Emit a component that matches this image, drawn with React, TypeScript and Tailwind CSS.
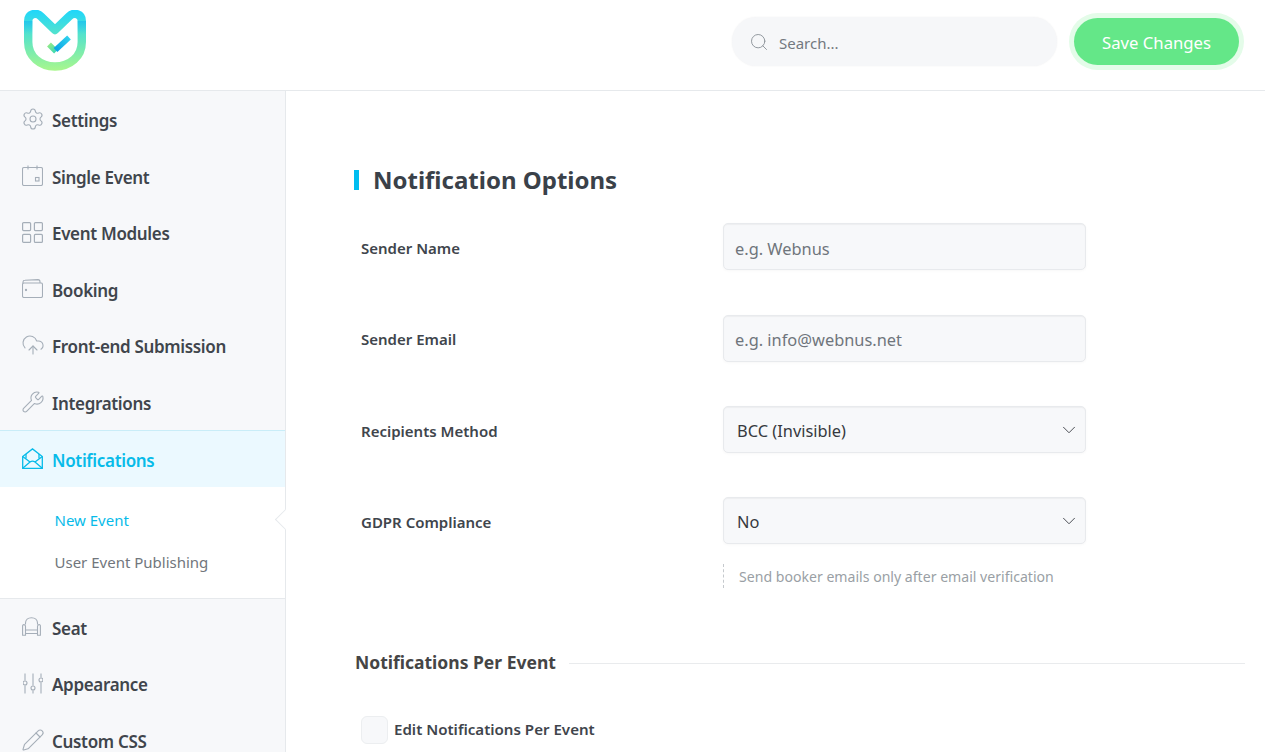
import { Settings, CloudUpload, Wrench, Pencil, Search, ChevronDown } from "lucide-react";

const C = "shrink-0 text-[#a5aeb8]";

function Cal() {
  return (
    <svg width="21" height="21" viewBox="0 0 21 21" fill="none" stroke="currentColor" strokeWidth="1.1" className={C}>
      <rect x="0.5" y="2.5" width="20" height="18" rx="1.5" />
      <path d="M6 0.5V4.5M15 0.5V4.5" />
      <rect x="13.5" y="12.5" width="3.5" height="3.5" />
    </svg>
  );
}
function Grid() {
  return (
    <svg width="21" height="21" viewBox="0 0 21 21" fill="none" stroke="currentColor" strokeWidth="1.2" className={C}>
      <rect x="0.6" y="0.6" width="8" height="8" rx="1" />
      <rect x="12.4" y="0.6" width="8" height="8" rx="1" />
      <rect x="0.6" y="12.4" width="8" height="8" rx="1" />
      <rect x="12.4" y="12.4" width="8" height="8" rx="1" />
    </svg>
  );
}
function Wallet() {
  return (
    <svg width="21" height="19" viewBox="0 0 21 19" fill="none" stroke="currentColor" strokeWidth="1.1" className={C}>
      <rect x="0.5" y="4" width="20" height="14.5" rx="1.5" />
      <path d="M1 4.5V3C1 2 2 1.2 3 1.2L16 0.6C17.2 0.6 18 1.5 18 2.8V4" />
      <circle cx="4" cy="11" r="0.6" fill="currentColor" />
    </svg>
  );
}
function Envelope() {
  return (
    <svg width="21" height="21" viewBox="0 0 21 21" fill="none" stroke="currentColor" strokeWidth="1.3" className="shrink-0 text-[#07bbe9]">
      <path d="M0.7 8.5L10.5 0.9L20.3 8.5V20.3H0.7Z" />
      <path d="M0.7 8.5L8 14M20.3 8.5L13 14M0.7 20.3L8 14C9.5 12.9 11.5 12.9 13 14L20.3 20.3" />
      <path d="M4 10.5V6M17 10.5V6" />
    </svg>
  );
}
function Seat() {
  return (
    <svg width="19" height="19" viewBox="0 0 19 19" fill="none" stroke="currentColor" strokeWidth="1.1" className={`${C} -ml-[2px]`}>
      <path d="M3.5 7.5V6C3.5 2.8 6 0.7 9.5 0.7S15.5 2.8 15.5 6V7.5" />
      <path d="M3.5 13V9.5C3.5 8.2 2.7 7.6 1.8 7.6C1 7.6 0.6 8.2 0.6 9V18.3H3.5V16.5H15.5V18.3H18.4V9C18.4 8.2 18 7.6 17.2 7.6C16.3 7.6 15.5 8.2 15.5 9.5V13Z" />
      <path d="M3.5 13V16.5M15.5 13V16.5" />
    </svg>
  );
}
function Sliders() {
  return (
    <svg width="20" height="21" viewBox="0 0 20 21" fill="none" stroke="currentColor" strokeWidth="1.1" className={C}>
      <path d="M2 0.5V7.5M2 12.5V20.5M10 0.5V12.5M10 17.5V20.5M18 0.5V4.5M18 9.5V20.5" />
      <circle cx="2" cy="10" r="2" />
      <circle cx="10" cy="15" r="2" />
      <circle cx="18" cy="7" r="2" />
    </svg>
  );
}

function Logo() {
  return (
    <svg width="62" height="61" viewBox="0 0 62 61" fill="none" className="ml-[24px] mt-[10px] shrink-0">
      <defs>
        <linearGradient id="lg" x1="0" y1="0" x2="0" y2="61" gradientUnits="userSpaceOnUse">
          <stop offset="0" stopColor="#1fd6fb" />
          <stop offset="0.45" stopColor="#5be4c6" />
          <stop offset="1" stopColor="#a9f78c" />
        </linearGradient>
        <linearGradient id="lb" x1="0" y1="6" x2="0" y2="24" gradientUnits="userSpaceOnUse">
          <stop offset="0" stopColor="#12b5ee" stopOpacity="0.75" />
          <stop offset="1" stopColor="#12b5ee" stopOpacity="0" />
        </linearGradient>
        <linearGradient id="lc" x1="31" y1="38" x2="46" y2="25" gradientUnits="userSpaceOnUse">
          <stop offset="0" stopColor="#0ba6e6" />
          <stop offset="1" stopColor="#35d7ee" />
        </linearGradient>
        <linearGradient id="ld" x1="23" y1="33" x2="31" y2="42" gradientUnits="userSpaceOnUse">
          <stop offset="0" stopColor="#a5ee7f" />
          <stop offset="1" stopColor="#3fd9b0" />
        </linearGradient>
      </defs>
      <path d="M4.2 32V11C4.2 4 12 1.6 17 6.5L31 20L45 6.5C50 1.6 57.8 4 57.8 11V32C57.8 46.5 46 56.5 31 56.5C16 56.5 4.2 46.5 4.2 32Z" stroke="url(#lg)" strokeWidth="8.4" strokeLinejoin="round" />
      <path d="M4.2 24V11M57.8 24V11" stroke="url(#lb)" strokeWidth="8.4" />
      <path d="M25 34.5L32 41.5" stroke="url(#ld)" strokeWidth="5.4" />
      <path d="M31.5 40L45 27.5" stroke="url(#lc)" strokeWidth="5.4" />
    </svg>
  );
}

function Item({ icon, label, active }: { icon: React.ReactNode; label: string; active?: boolean }) {
  return (
    <div className={active ? "flex h-[56.5px] items-center gap-[9px] border-t border-[#c9edf8] bg-[#ebf9ff] pl-[22px] text-[#07bbe9]" : "flex h-[56.5px] items-center gap-[9px] pl-[22px] text-[#40454c]"}>
      <span className="flex w-[21px] justify-center">{icon}</span>
      <span className="pt-[2.6px] text-[17px] font-semibold leading-none tracking-[-0.33px]">{label}</span>
    </div>
  );
}

function Row({ label, children, mb }: { label: string; children: React.ReactNode; mb: string }) {
  return (
    <div className={`flex items-center ${mb}`}>
      <label className="w-[369px] pl-[7px] pt-[3px] text-[15px] font-semibold text-[#40454c]">{label}</label>
      {children}
    </div>
  );
}

const field = "h-[47px] w-[363px] rounded-[5px] border border-[#e8eaed] bg-[#f7f8fa] text-[16.4px] shadow-[inset_0_1px_1px_rgba(0,0,0,0.04),0_1px_3px_rgba(0,0,0,0.03)] outline-none placeholder:text-[#6f757c]";

function Select({ value }: { value: string }) {
  return (
    <div className="relative h-[47px] w-[363px]">
      <select defaultValue={value} className={`${field} appearance-none pl-[13px] pt-[4px] text-[#36393e]`}>
        <option>{value}</option>
      </select>
      <ChevronDown size={22} strokeWidth={1} className="pointer-events-none absolute right-[6.5px] top-[12.5px] text-[#3c4046]" />
    </div>
  );
}

export default function App() {
  return (
    <div className="h-[752px] w-full overflow-hidden bg-white font-['Noto_Sans','Open_Sans',sans-serif]">
      <header className="flex h-[91px] items-start border-b border-[#e6e9ec]">
        <Logo />
        <div className="ml-auto mr-[26px] mt-[17px] flex items-start gap-[17px]">
          <div className="flex h-[49px] w-[325px] items-center gap-[10px] rounded-full bg-[#f6f7f9] pl-[17px] shadow-[0_0_2px_rgba(0,0,0,0.06)]">
            <Search size={20} strokeWidth={1.1} className="text-[#8a9097]" />
            <input placeholder="Search..." className="w-[250px] bg-transparent pt-[4px] text-[15px] outline-none placeholder:text-[#737980]" />
          </div>
          <button className="mt-px h-[47px] w-[165px] rounded-full bg-[#64e788] pt-[3px] text-[16.7px] text-white shadow-[0_0_0_5px_#e4fce9]">Save Changes</button>
        </div>
      </header>
      <div className="flex">
        <aside className="h-[661px] w-[286px] shrink-0 border-r border-[#e6e9ec] bg-[#f7f8fa]">
          <Item icon={<Settings size={24} strokeWidth={1.1} className={C} />} label="Settings" />
          <Item icon={<Cal />} label="Single Event" />
          <Item icon={<Grid />} label="Event Modules" />
          <Item icon={<Wallet />} label="Booking" />
          <Item icon={<CloudUpload size={24} strokeWidth={1.1} className={C} />} label="Front-end Submission" />
          <Item icon={<Wrench size={24} strokeWidth={1.1} className={C} />} label="Integrations" />
          <Item icon={<Envelope />} label="Notifications" active />
          <div className="relative h-[112px] border-b border-[#e6e9ec] bg-white pl-[54.5px] pt-[23px] text-[15px] leading-5">
            <div className="text-[#07bbe9]">New Event</div>
            <div className="mt-[22px] text-[#71767c]">User Event Publishing</div>
            <span className="absolute right-[-7.5px] top-[25px] h-[15px] w-[15px] rotate-45 border-b border-l border-[#e6e9ec] bg-white" />
          </div>
          <Item icon={<Seat />} label="Seat" />
          <Item icon={<Sliders />} label="Appearance" />
          <Item icon={<Pencil size={24} strokeWidth={1.1} className={C} />} label="Custom CSS" />
        </aside>
        <main className="min-w-0 flex-1 pl-[68px] pr-[20px] pt-[71px]">
          <h2 className="mb-[25px] flex h-[36px] items-center gap-[14px] text-[24px] font-bold text-[#3a4149]">
            <span className="h-5 w-[5px] bg-[#00bdf0]" />
            Notification Options
          </h2>
          <Row label="Sender Name" mb="mb-[44.5px]"><input placeholder="e.g. Webnus" className={`${field} px-[11px] pt-[3px]`} /></Row>
          <Row label="Sender Email" mb="mb-[44.5px]"><input placeholder="e.g. info@webnus.net" className={`${field} px-[11px] pt-[3px]`} /></Row>
          <Row label="Recipients Method" mb="mb-[44px]"><Select value="BCC (Invisible)" /></Row>
          <Row label="GDPR Compliance" mb="mb-[19.5px]"><Select value="No" /></Row>
          <div className="ml-[369px] flex h-[24px] items-center border-l border-dashed border-[#c5c9cd] pl-[15px] pt-[2px] text-[14.1px] text-[#9a9fa5]">
            Send booker emails only after email verification
          </div>
          <div className="mt-[61px] flex h-[27px] items-center gap-[13px]">
            <h3 className="pl-px text-[17.5px] font-bold text-[#454545]">Notifications Per Event</h3>
            <span className="mt-[2px] h-px flex-1 bg-[#e9ebed]" />
          </div>
          <div className="ml-[7px] mt-[40px] flex items-center gap-[6px]">
            <span className="h-[28px] w-[27px] rounded-[6px] border border-[#eceef0] bg-[#f7f8fa]" />
            <span className="text-[15.1px] font-semibold text-[#40454c]">Edit Notifications Per Event</span>
          </div>
        </main>
      </div>
    </div>
  );
}
